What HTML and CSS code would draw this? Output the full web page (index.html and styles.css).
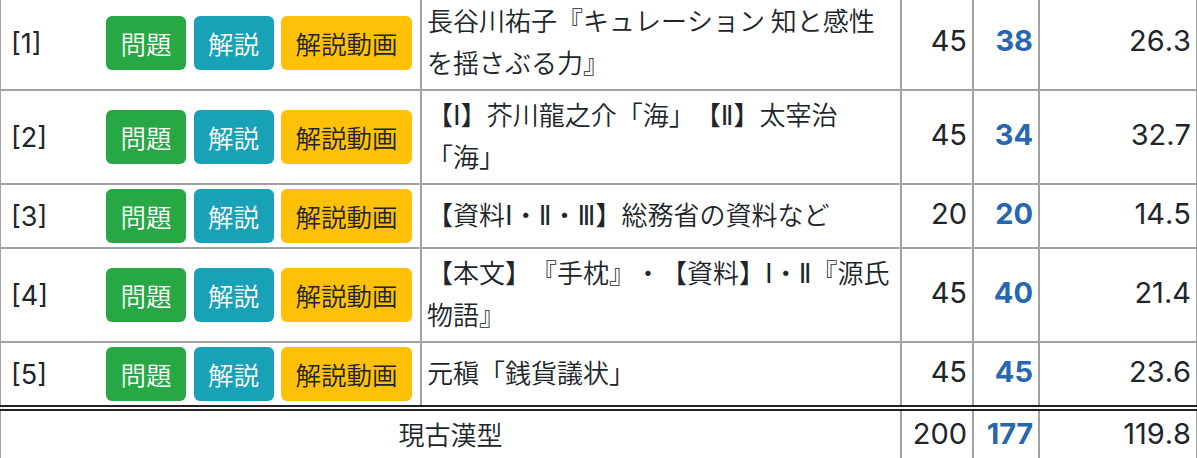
FILE: index.html
```html
<!DOCTYPE html>
<html lang="ja">
<head>
<meta charset="utf-8">
<title>得点表</title>
<link rel="stylesheet" href="styles.css">
</head>
<body>
<table class="score-table">
  <colgroup>
    <col class="col-q">
    <col class="col-title">
    <col class="col-full">
    <col class="col-score">
    <col class="col-avg">
  </colgroup>
  <tbody>
    <tr>
      <td class="cell-q">
        <div class="q-wrap">
          <span class="q-no">[1]</span>
          <div class="btns">
            <a class="btn btn-green">問題</a>
            <a class="btn btn-teal">解説</a>
            <a class="btn btn-yellow">解説動画</a>
          </div>
        </div>
      </td>
      <td class="cell-title">長谷川祐子『キュレーション 知と感性を揺さぶる力』</td>
      <td class="num">45</td>
      <td class="num score">38</td>
      <td class="num">26.3</td>
    </tr>
    <tr>
      <td class="cell-q">
        <div class="q-wrap">
          <span class="q-no">[2]</span>
          <div class="btns">
            <a class="btn btn-green">問題</a>
            <a class="btn btn-teal">解説</a>
            <a class="btn btn-yellow">解説動画</a>
          </div>
        </div>
      </td>
      <td class="cell-title">【<span class="rn">Ⅰ</span>】芥川龍之介「海」【<span class="rn">Ⅱ</span>】太宰治「海」</td>
      <td class="num">45</td>
      <td class="num score">34</td>
      <td class="num">32.7</td>
    </tr>
    <tr>
      <td class="cell-q">
        <div class="q-wrap">
          <span class="q-no">[3]</span>
          <div class="btns">
            <a class="btn btn-green">問題</a>
            <a class="btn btn-teal">解説</a>
            <a class="btn btn-yellow">解説動画</a>
          </div>
        </div>
      </td>
      <td class="cell-title">【資料<span class="rn">Ⅰ</span>・<span class="rn">Ⅱ</span>・<span class="rn">Ⅲ</span>】総務省の資料など</td>
      <td class="num">20</td>
      <td class="num score">20</td>
      <td class="num">14.5</td>
    </tr>
    <tr>
      <td class="cell-q">
        <div class="q-wrap">
          <span class="q-no">[4]</span>
          <div class="btns">
            <a class="btn btn-green">問題</a>
            <a class="btn btn-teal">解説</a>
            <a class="btn btn-yellow">解説動画</a>
          </div>
        </div>
      </td>
      <td class="cell-title">【本文】『手枕』・【資料】<span class="rn">Ⅰ</span>・<span class="rn">Ⅱ</span>『源氏物語』</td>
      <td class="num">45</td>
      <td class="num score">40</td>
      <td class="num">21.4</td>
    </tr>
    <tr>
      <td class="cell-q">
        <div class="q-wrap">
          <span class="q-no">[5]</span>
          <div class="btns">
            <a class="btn btn-green">問題</a>
            <a class="btn btn-teal">解説</a>
            <a class="btn btn-yellow">解説動画</a>
          </div>
        </div>
      </td>
      <td class="cell-title">元稹「銭貨議状」</td>
      <td class="num">45</td>
      <td class="num score">45</td>
      <td class="num">23.6</td>
    </tr>
  </tbody>
  <tfoot>
    <tr>
      <td class="cell-total" colspan="2">現古漢型</td>
      <td class="num">200</td>
      <td class="num score">177</td>
      <td class="num">119.8</td>
    </tr>
  </tfoot>
</table>
</body>
</html>
```

FILE: styles.css
```css
html, body {
  margin: 0;
  padding: 0;
  background: #ffffff;
}

body {
  overflow: hidden;
  color: #212529;
  font-family: "Noto Sans CJK JP", sans-serif;
  font-size: 26px;
  font-weight: 350;
  text-spacing-trim: space-all;
  text-autospace: no-autospace;
  font-kerning: none;
}

.score-table {
  border-collapse: collapse;
  table-layout: fixed;
  width: 1197px;
  margin: -5px 0 0 -1px;
}

.col-q { width: 421px; }
.col-title { width: 480px; }
.col-full { width: 72px; }
.col-score { width: 66px; }
.col-avg { width: 158px; }

.score-table td {
  border: 2px solid #a2a2a2;
  vertical-align: middle;
  line-height: 42px;
}

.cell-q {
  padding: 4px 0 4px 10px;
}

.q-wrap {
  display: flex;
  align-items: center;
  height: 54px;
}

.q-no {
  display: block;
  width: 95px;
  flex: none;
  height: 54px;
  line-height: 56px;
  font-family: Inter, "Liberation Sans", sans-serif;
  font-size: 27px;
  font-weight: 400;
}

.btns {
  display: flex;
  gap: 7.5px;
}

.btn {
  display: block;
  height: 54px;
  line-height: 54px;
  padding: 0 14.5px;
  border-radius: 6px;
  font-family: "Noto Sans CJK JP", sans-serif;
  font-size: 25.5px;
  color: #ffffff;
  text-decoration: none;
}

.btn-green { background: #28a745; }
.btn-teal { background: #17a2b8; }
.btn-yellow { background: #ffc107; color: #212529; }

.cell-title {
  padding: 2px 3px 6px 5px;
  font-size: 26px;
}

.rn {
  font-family: "DejaVu Sans", sans-serif;
  font-weight: 400;
  line-height: 0;
}

.num {
  padding: 2px 5px 6px 0;
  text-align: right;
  font-family: Inter, "Liberation Sans", sans-serif;
  font-size: 29px;
  font-weight: 400;
}

.score {
  color: #2767b0;
  font-weight: 700;
}

.score-table tfoot td {
  border-top: 6px double #222222;
}

.cell-total {
  text-align: center;
  padding: 2px 0 6px;
  font-size: 26px;
}
```
